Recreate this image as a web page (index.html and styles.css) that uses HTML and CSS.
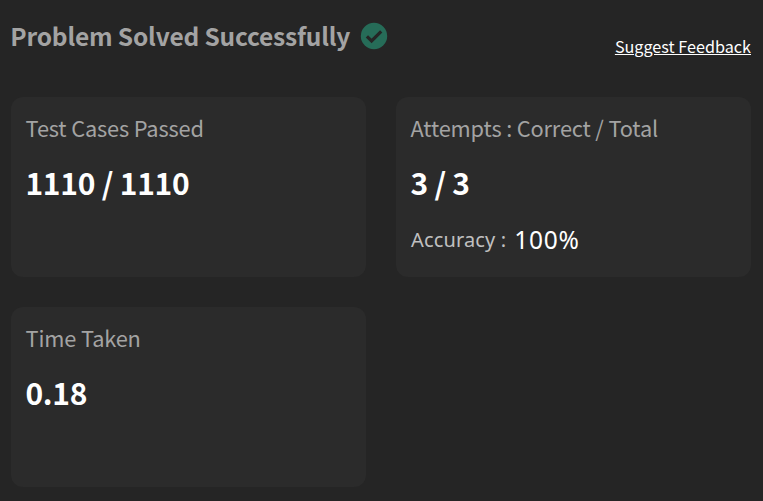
FILE: index.html
```html
<!DOCTYPE html>
<html lang="en">
<head>
<meta charset="utf-8">
<title>Submission result</title>
<link rel="stylesheet" href="styles.css">
</head>
<body>
<main class="result">
  <header class="header">
    <h1 class="title">Problem Solved Successfully</h1>
    <svg class="check" viewBox="0 0 28 28" aria-hidden="true"><circle cx="14" cy="14" r="13.2"/><path d="M6.9 14.3l4.7 4.7 9.6-9.6"/></svg>
    <a class="feedback" href="#">Suggest Feedback</a>
  </header>
  <section class="cards">
    <article class="card">
      <h2 class="label">Test Cases Passed</h2>
      <p class="value">1110 / 1110</p>
    </article>
    <article class="card">
      <h2 class="label">Attempts : Correct / Total</h2>
      <p class="value">3 / 3</p>
      <p class="accuracy"><span class="accuracy-label">Accuracy :</span><span class="percent">100%</span></p>
    </article>
    <article class="card">
      <h2 class="label">Time Taken</h2>
      <p class="value">0.18</p>
    </article>
  </section>
</main>
</body>
</html>
```

FILE: styles.css
```css
* { box-sizing: border-box; margin: 0; }
body { background: #252525; font-family: "Noto Sans CJK SC", sans-serif; color: #fff; }
.result { padding: 15px 12px 0 11px; }
.header { display: flex; height: 82px; align-items: flex-start; white-space: nowrap; }
.title { font-size: 24.5px; letter-spacing: -0.18px; line-height: 42px; font-weight: 700; color: #a3a3a3; width: 339px; text-indent: -0.7px; }
.check { width: 28px; height: 28px; margin: 7px 0 0 10px; }
.check circle { fill: #266c58; }
.check path { fill: none; stroke: #252525; stroke-width: 3.2; }
.feedback { margin: 19px 0 0 auto; font-size: 16.2px; line-height: 24px; color: #fff; }
.cards { display: grid; grid-template-columns: 355px 355px; gap: 30px; }
.card { height: 180px; padding: 15px; background: #2b2b2b; border-radius: 12px; white-space: nowrap; }
.label { font-size: 21.8px; letter-spacing: -0.16px; line-height: 32px; font-weight: 400; color: #a3a3a3; text-indent: -0.4px; }
.value { font-size: 30px; letter-spacing: -0.25px; line-height: 40px; font-weight: 700; margin-top: 18px; text-indent: -0.6px; }
.accuracy { display: flex; gap: 8px; margin-top: 22px; line-height: 32px; font-family: "Noto Sans", sans-serif; }
.accuracy-label { font-size: 20px; letter-spacing: 0.15px; color: #c0c0c0; }
.percent { font-size: 24.5px; letter-spacing: 0.75px; line-height: 31px; }
```
